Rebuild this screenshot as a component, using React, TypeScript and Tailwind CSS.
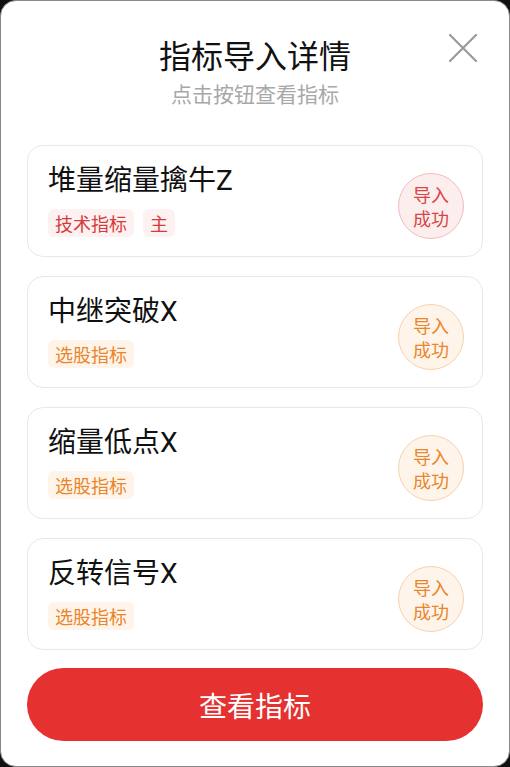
import React from "react";

type Item = {
  name: string;
  tags: string[];
  tone: "red" | "orange";
};

const items: Item[] = [
  { name: "堆量缩量擒牛Z", tags: ["技术指标", "主"], tone: "red" },
  { name: "中继突破X", tags: ["选股指标"], tone: "orange" },
  { name: "缩量低点X", tags: ["选股指标"], tone: "orange" },
  { name: "反转信号X", tags: ["选股指标"], tone: "orange" },
];

function Card({ item }: { item: Item }) {
  const red = item.tone === "red";
  return (
    <div className="flex h-[112px] items-center justify-between rounded-[16px] border border-[#e8e8e8] bg-white pl-[20px] pr-[18px]">
      <div className="-mt-[2px] flex flex-col">
        <div
          className="text-[28px] leading-[36px] text-[#111]"
          style={{ fontFamily: 'Roboto, "Noto Sans CJK SC", sans-serif' }}
        >
          {item.name}
        </div>
        <div className="mt-[10px] flex gap-[9px]">
          {item.tags.map((t) => (
            <span
              key={t}
              className={
                red
                  ? "flex h-[28px] items-center rounded-[6px] bg-[#fdf1f1] px-[7px] text-[18px] leading-none text-[#d63b3b]"
                  : "flex h-[28px] items-center rounded-[6px] bg-[#fff4ea] px-[7px] text-[18px] leading-none text-[#e8862a]"
              }
            >
              {t}
            </span>
          ))}
        </div>
      </div>
      <div
        className={
          red
            ? "mt-[10px] flex h-[66px] w-[66px] flex-col items-center justify-center rounded-full border border-[#f0bcbc] bg-[#fdeeee] text-[18px] leading-[24px] text-[#d94444]"
            : "mt-[10px] flex h-[66px] w-[66px] flex-col items-center justify-center rounded-full border border-[#f5d2ae] bg-[#fff4ea] text-[18px] leading-[24px] text-[#e8862a]"
        }
      >
        <span>导入</span>
        <span>成功</span>
      </div>
    </div>
  );
}

export default function App() {
  return (
    <div
      className="h-[767px] w-[510px] bg-[#111]"
      style={{ fontFamily: '"Noto Sans CJK SC", "Noto Sans", sans-serif' }}
    >
      <div className="relative flex h-full w-full flex-col rounded-[16px] border border-[#888] bg-white px-[26px]">
        <button className="absolute right-[32px] top-[33px] h-[28px] w-[28px]" aria-label="close">
          <svg viewBox="0 0 28 28" width="28" height="28">
            <path d="M1 1L27 27M27 1L1 27" stroke="#9a9a9a" strokeWidth="2.2" strokeLinecap="round" />
          </svg>
        </button>
        <div className="mt-[32px] text-center text-[32px] leading-[42px] text-[#111]">指标导入详情</div>
        <div className="mt-[3px] text-center text-[21px] leading-[30px] text-[#a8a8a8]">点击按钮查看指标</div>
        <div className="mt-[37px] flex flex-col gap-[19px]">
          {items.map((it) => (
            <Card key={it.name} item={it} />
          ))}
        </div>
        <button className="mt-[18px] flex h-[73px] w-full items-center justify-center rounded-full bg-[#e63131] text-[28px] text-white">
          查看指标
        </button>
      </div>
    </div>
  );
}
